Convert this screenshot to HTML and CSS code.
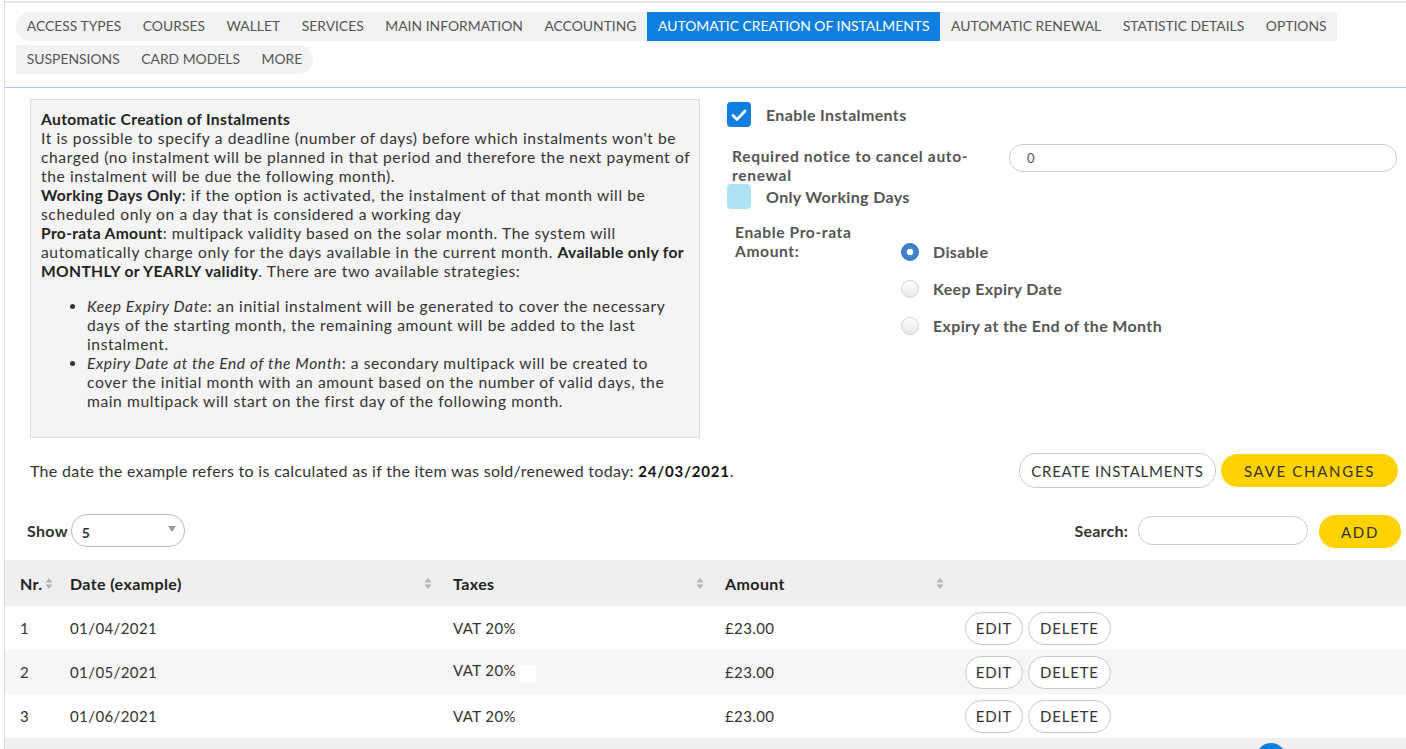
FILE: index.html
```html
<!DOCTYPE html>
<html>
<head>
<meta charset="utf-8">
<link rel="stylesheet" href="styles.css">
</head>
<body>
<div class="page">
  <nav class="tabs">
    <div class="tabs-inner">
      <span class="tab first">ACCESS TYPES</span>
      <span class="tab">COURSES</span>
      <span class="tab">WALLET</span>
      <span class="tab">SERVICES</span>
      <span class="tab">MAIN INFORMATION</span>
      <span class="tab">ACCOUNTING</span>
      <span class="tab active">AUTOMATIC CREATION OF INSTALMENTS</span>
      <span class="tab">AUTOMATIC RENEWAL</span>
      <span class="tab">STATISTIC DETAILS</span>
      <span class="tab">OPTIONS</span>
      <span class="tab">SUSPENSIONS</span>
      <span class="tab">CARD MODELS</span>
      <span class="tab last">MORE</span>
    </div>
  </nav>

  <div class="content">
    <div class="info">
      <b>Automatic Creation of Instalments</b><br>
      It is possible to specify a deadline (number of days) before which instalments won't be charged (no instalment will be planned in that period and therefore the next payment of the instalment will be due the following month).<br>
      <b>Working Days Only</b>: if the option is activated, the instalment of that month will be scheduled only on a day that is considered a working day<br>
      <b>Pro-rata Amount</b>: multipack validity based on the solar month. The system will automatically charge only for the days available in the current month. <b>Available only for MONTHLY or YEARLY validity</b>. There are two available strategies:
      <ul>
        <li><i>Keep Expiry Date</i>: an initial instalment will be generated to cover the necessary days of the starting month, the remaining amount will be added to the last instalment.</li>
        <li><i>Expiry Date at the End of the Month</i>: a secondary multipack will be created to cover the initial month with an amount based on the number of valid days, the main multipack will start on the first day of the following month.</li>
      </ul>
    </div>

    <div class="form">
      <div class="check-row">
        <span class="check on"><svg viewBox="0 0 24 24" width="24" height="24"><path d="M6 12.5l4 4 8-8.5" fill="none" stroke="#fff" stroke-width="2.6" stroke-linecap="round" stroke-linejoin="round"/></svg></span>
        <span class="lbl">Enable Instalments</span>
      </div>
      <div class="field-row">
        <span class="field-lbl">Required notice to cancel auto-renewal</span>
        <span class="input wide">0</span>
      </div>
      <div class="check-row tight">
        <span class="check off"></span>
        <span class="lbl">Only Working Days</span>
      </div>
      <div class="radio-block">
        <span class="radio-lbl">Enable Pro-rata Amount:</span>
        <div class="radios">
          <div class="radio-row"><span class="radio sel"></span><span class="lbl">Disable</span></div>
          <div class="radio-row"><span class="radio"></span><span class="lbl">Keep Expiry Date</span></div>
          <div class="radio-row"><span class="radio"></span><span class="lbl">Expiry at the End of the Month</span></div>
        </div>
      </div>
    </div>
  </div>

  <div class="action-row">
    <span class="date-note">The date the example refers to is calculated as if the item was sold/renewed today: <b class="date">24/03/2021</b>.</span>
    <div class="btns">
      <span class="btn outline">CREATE INSTALMENTS</span>
      <span class="btn yellow">SAVE CHANGES</span>
    </div>
  </div>

  <div class="table-tools">
    <div class="show">Show <span class="select">5<svg class="caret" viewBox="0 0 8 6" width="8" height="6"><path d="M0 0h8L4 6z" fill="#999"/></svg></span></div>
    <div class="search">
      <span class="search-lbl">Search:</span>
      <span class="input search-input"></span>
      <span class="btn yellow add">ADD</span>
    </div>
  </div>

  <table class="grid">
    <colgroup><col class="c1"><col class="c2"><col class="c3"><col class="c4"><col></colgroup>
    <thead>
      <tr>
        <th><span class="nr">Nr.<svg class="sort" viewBox="0 0 8 13" width="8" height="13"><path d="M4 1L7.5 5.5h-7zM4 12L0.5 7.5h7z" fill="#b4b4b4"/></svg></span></th>
        <th class="sortable">Date (example)<svg class="sort right" viewBox="0 0 8 13" width="8" height="13"><path d="M4 1L7.5 5.5h-7zM4 12L0.5 7.5h7z" fill="#b4b4b4"/></svg></th>
        <th class="sortable">Taxes<svg class="sort right" viewBox="0 0 8 13" width="8" height="13"><path d="M4 1L7.5 5.5h-7zM4 12L0.5 7.5h7z" fill="#b4b4b4"/></svg></th>
        <th class="sortable">Amount<svg class="sort right" viewBox="0 0 8 13" width="8" height="13"><path d="M4 1L7.5 5.5h-7zM4 12L0.5 7.5h7z" fill="#b4b4b4"/></svg></th>
        <th></th>
      </tr>
    </thead>
    <tbody>
      <tr>
        <td>1</td><td>01/04/2021</td><td>VAT 20%</td><td>£23.00</td>
        <td><span class="btn small edit">EDIT</span><span class="btn small">DELETE</span></td>
      </tr>
      <tr class="alt">
        <td>2</td><td>01/05/2021</td><td>VAT 20%<span class="blank"></span></td><td>£23.00</td>
        <td><span class="btn small edit">EDIT</span><span class="btn small">DELETE</span></td>
      </tr>
      <tr>
        <td>3</td><td>01/06/2021</td><td>VAT 20%</td><td>£23.00</td>
        <td><span class="btn small edit">EDIT</span><span class="btn small">DELETE</span></td>
      </tr>
    </tbody>
  </table>
  <div class="table-foot"><span class="page-dot"></span></div>
</div>
</body>
</html>
```

FILE: styles.css
```css
* { box-sizing: border-box; }
html, body { margin: 0; padding: 0; background: #fff; }
body {
  font-family: Lato, "Open Sans", "Liberation Sans", sans-serif;
  color: #333;
  font-size: 15px;
  overflow: hidden;
  height: 749px;
}
.page {
  margin: 1px 0 0 4px;
  border-left: 1px solid #dcdcdc;
  border-top: 2px solid #e4e4e4;
  min-height: 748px;
}

/* tabs */
.tabs {
  padding: 9px 0 13px 11px;
  border-bottom: 1px solid #a9cdea;
}
.tabs-inner {
  display: flex;
  flex-wrap: wrap;
  row-gap: 4px;
  width: 1340px;
}
.tab {
  background: #f2f2f2;
  color: #555;
  font-size: 13.9px;
  height: 29px;
  line-height: 28px;
  padding: 0 10.75px;
  white-space: nowrap;
}
.tab.first { border-radius: 15px 0 0 15px; }
.tab.last { border-radius: 0 15px 15px 0; }
.tab.active { background: #0f7fdf; color: #fff; }

/* content */
.content {
  display: grid;
  grid-template-columns: 670px 1fr;
  column-gap: 27px;
  padding: 11px 9px 0 25px;
}
.info {
  background: #f4f4f4;
  border: 1px solid #dcdcdc;
  padding: 10px 8px 10px 10px;
  line-height: 19px;
  font-size: 15.6px;
  letter-spacing: 0.6px;
  color: #333;
  height: 339px;
}
.info b { color: #222; letter-spacing: 0.35px; }
.info ul {
  margin: 16px 0 0 0;
  padding-left: 46px;
}

.form { padding-top: 3px; color: #555; }
.lbl { font-weight: bold; color: #555; font-size: 16px; letter-spacing: 0.35px; }
.check-row { display: flex; align-items: center; gap: 15px; height: 25px; }
.check {
  width: 24px; height: 25px; border-radius: 4px; display: inline-flex;
  align-items: center; justify-content: center;
}
.check.on { background: #0f7fdf; }
.check.off { background: #ade3f4; }
.field-row {
  display: flex;
  justify-content: space-between;
  margin-top: 17px;
  padding-left: 5px;
}
.field-lbl {
  width: 250px;
  font-weight: bold;
  line-height: 19px;
  font-size: 15.6px;
  letter-spacing: 0.65px;
  color: #555;
  padding-top: 3px;
}
.input {
  display: inline-block;
  border: 1px solid #ccc;
  border-radius: 14px;
  height: 28px;
  background: #fff;
}
.input.wide {
  width: 388px;
  padding-left: 17px;
  line-height: 26px;
  font-size: 13px;
  color: #555;
}
.check-row.tight { margin-top: -1px; }
.radio-block {
  display: flex;
  margin-top: 14px;
  padding-left: 8px;
}
.radio-lbl {
  width: 166px;
  font-weight: bold;
  color: #555;
  line-height: 19px;
  font-size: 15.6px;
  letter-spacing: 0.6px;
  padding-right: 20px;
}
.radios { padding-top: 10px; }
.radio-row { display: flex; align-items: center; gap: 14px; height: 37px; }
.radio {
  width: 18px; height: 18px; border-radius: 50%;
  border: 1px solid #d4d4d4;
  background: linear-gradient(#fdfdfd, #e8e8e8);
}
.radio.sel {
  border-color: #3a78c0;
  background: radial-gradient(circle, #fff 0 3px, #4a8ad4 3.5px, #2f6fbd 100%);
}

/* actions */
.action-row {
  display: flex;
  justify-content: space-between;
  align-items: center;
  padding: 15px 8px 0 25px;
}
.date-note { font-size: 16px; letter-spacing: 0.3px; color: #333; }
.date { color: #111; letter-spacing: 0.8px; font-size: 15px; }
.btns { display: flex; gap: 5px; }
.btn {
  display: inline-flex;
  align-items: center;
  justify-content: center;
  border-radius: 17px;
  font-size: 15px;
  color: #333;
  white-space: nowrap;
}
.btn.outline {
  height: 35px; width: 197px;
  border: 1px solid #c8c8c8;
  background: #fff;
  letter-spacing: 0.75px;
}
.btn.yellow {
  height: 33px; width: 177px;
  background: #ffd200;
  letter-spacing: 1.7px;
  margin-top: 1px;
}

.table-tools {
  display: flex;
  justify-content: space-between;
  align-items: center;
  padding: 25px 5px 0 22px;
}
.show { display: flex; align-items: center; gap: 3px; font-weight: bold; color: #333; font-size: 16px; letter-spacing: 0.3px; }
.select {
  position: relative;
  width: 114px; height: 33px;
  border: 1px solid #bbb;
  border-radius: 16px;
  padding-left: 10px;
  line-height: 35px;
  font-weight: bold;
  font-size: 14px;
}
.caret { position: absolute; right: 8px; top: 11px; }
.search { display: flex; align-items: center; }
.search-lbl { font-weight: bold; color: #333; margin-right: 10px; font-size: 16px; letter-spacing: 0.2px; }
.search-input { width: 170px; height: 29px; border-color: #ccc; }
.btn.add { width: 82px; height: 33px; margin-left: 11px; margin-top: 2px; }

/* table */
.grid {
  width: 100%;
  border-collapse: collapse;
  table-layout: fixed;
  margin-top: 12px;
}
.c1 { width: 50px; }
.c2 { width: 383px; }
.c3 { width: 272px; }
.c4 { width: 240px; }
.grid thead tr { background: #efefef; height: 46px; }
.grid th {
  text-align: left;
  font-weight: bold;
  color: #222;
  padding-left: 15px;
  font-size: 16px;
  letter-spacing: 0.4px;
  position: relative;
}
.nr { display: inline-flex; align-items: center; gap: 2px; }
.sort.right { position: absolute; right: 6px; top: 17px; }
.grid td {
  height: 44px;
  padding-left: 15px;
  font-size: 15px;
  letter-spacing: 0.4px;
  color: #333;
}
.grid tr.alt { background: #f6f6f6; }
.blank { display: inline-block; width: 17px; height: 17px; background: #fff; vertical-align: middle; margin-left: 3px; margin-top: 4px; }
.btn.small {
  height: 33px;
  padding: 0 11px;
  border: 1px solid #c8c8c8;
  background: #fff;
  margin-right: 5px;
  vertical-align: middle;
  letter-spacing: 0.8px;
}
.btn.small.edit { width: 58px; padding: 0; }
.table-foot {
  background: #efefef;
  height: 20px;
  position: relative;
  overflow: hidden;
}
.page-dot {
  position: absolute;
  left: 1251px;
  top: 5px;
  width: 30px; height: 30px;
  border-radius: 50%;
  background: #0f7fdf;
}
```
